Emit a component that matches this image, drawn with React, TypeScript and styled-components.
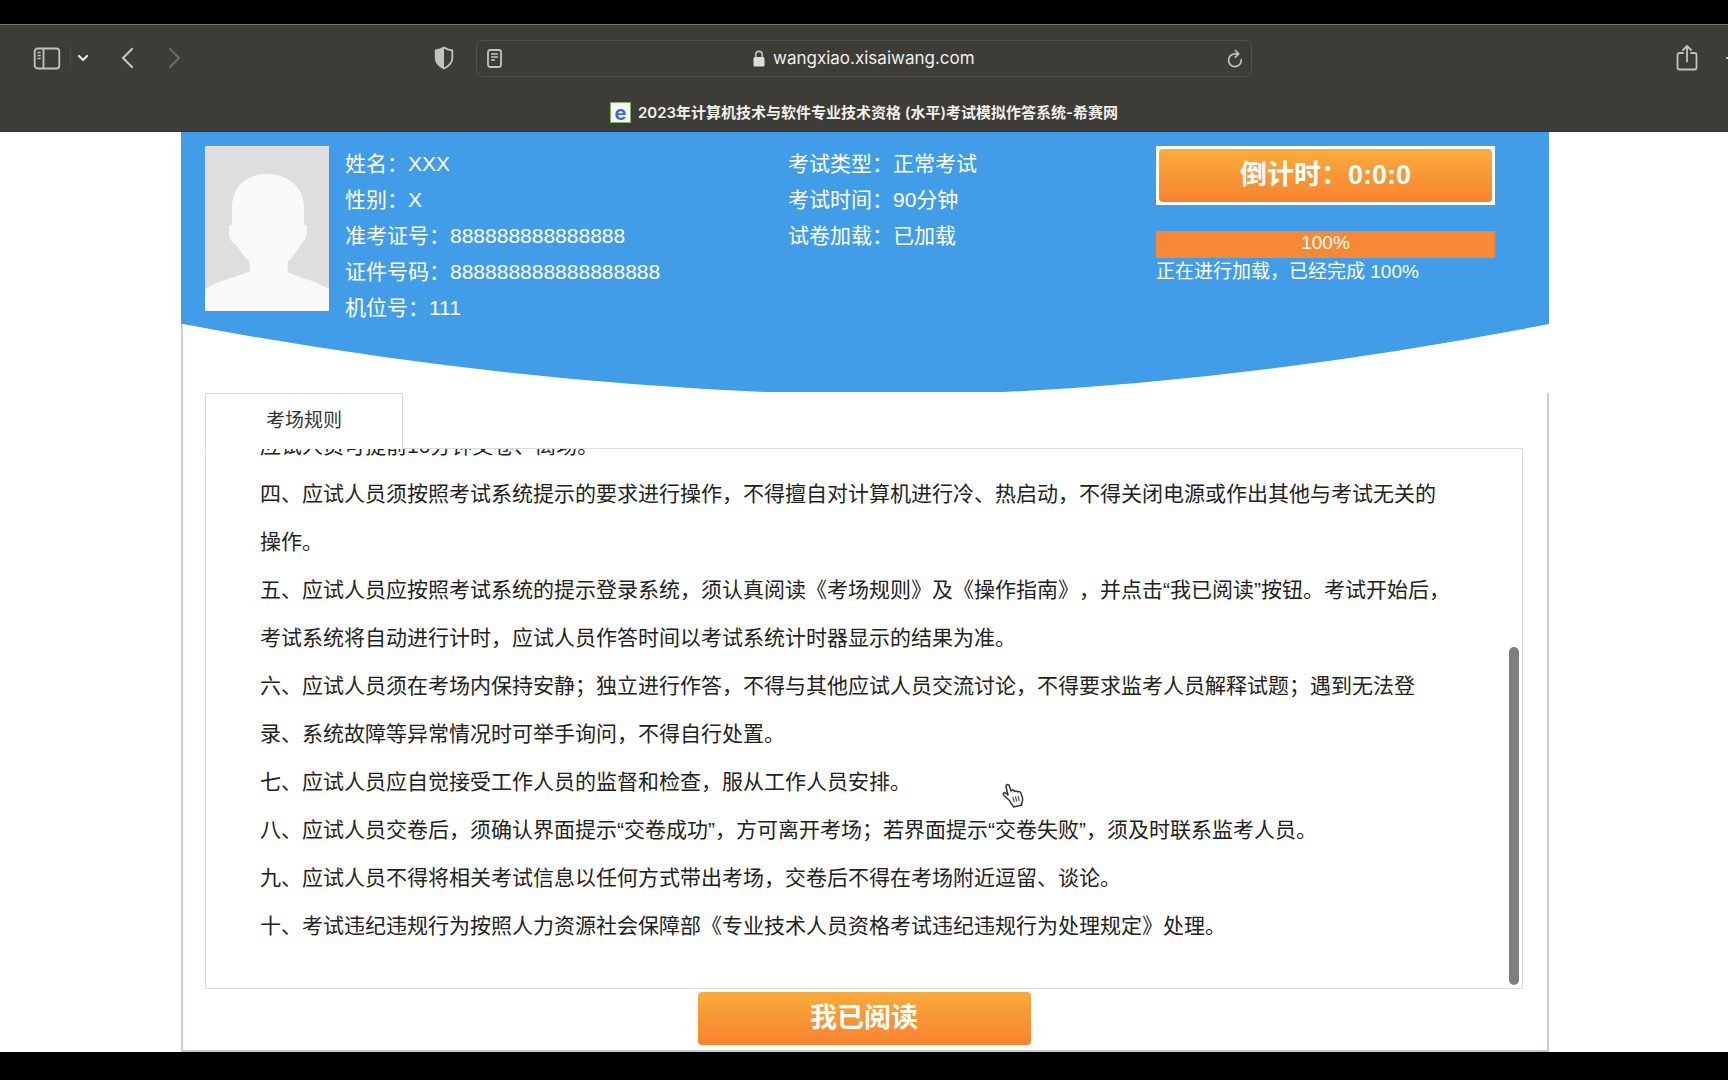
import React, { useLayoutEffect, useRef } from "react";
import styled, { createGlobalStyle } from "styled-components";

const GlobalStyle = createGlobalStyle`
  *, *::before, *::after { box-sizing: border-box; }
  body {
    margin: 0;
    background: #000;
    font-family: "Liberation Sans", "Noto Sans CJK SC", sans-serif;
    text-spacing-trim: space-all;
  }
  button, input { font: inherit; }
`;

const Screen = styled.div`
  display: flex;
  flex-direction: column;
  padding: 24px 0 28px;
  overflow: hidden;
`;

/* ---------- browser chrome ---------- */

const Chrome = styled.header`
  display: flex;
  flex-direction: column;
  height: 108px;
  background: #3d3c36;
  border-top: 1px solid #77776f;
  border-bottom: 1px solid #32383a;
  color: #f0f0ec;
  font-family: Inter, "Noto Sans CJK SC", sans-serif;
`;

const Toolbar = styled.div`
  display: grid;
  grid-template-columns: 1fr 776px 1fr;
  align-items: center;
  height: 66px;
`;

const ToolGroup = styled.div<{ $end?: boolean }>`
  display: flex;
  align-items: center;
  justify-content: ${(p) => (p.$end ? "flex-end" : "flex-start")};
  padding-left: ${(p) => (p.$end ? 0 : 33)}px;
  min-width: 0;
`;

const ToolButton = styled.button<{ $dim?: boolean; $gap?: number }>`
  display: flex;
  flex: none;
  padding: 0;
  margin-left: ${(p) => p.$gap ?? 0}px;
  border: 0;
  background: none;
  color: ${(p) => (p.$dim ? "#6c6c66" : "#c3c3bd")};
`;

const ToolDivider = styled.span`
  width: 1px;
  height: 24px;
  margin-left: 9px;
  background: #4b4b45;
`;

const Spacer = styled.span`
  flex: 1;
`;

const ShieldSlot = styled.span`
  display: flex;
  padding-right: 22px;
`;

const AddressBar = styled.div`
  display: flex;
  align-items: center;
  justify-content: space-between;
  height: 37px;
  padding: 0 8px 0 10px;
  border: 1px solid #51514b;
  border-radius: 7px;
`;

const Address = styled.label`
  display: flex;
  align-items: center;
  gap: 8px;
`;

const AddressInput = styled.input`
  width: 203px;
  padding: 0;
  border: 0;
  outline: 0;
  background: none;
  color: #f0f0ec;
  font-size: 17px;
  line-height: 24px;
`;

const TabTitle = styled.div`
  display: flex;
  align-items: center;
  justify-content: center;
  gap: 7px;
  height: 40px;
  padding-top: 3px;
  font-size: 15px;
  font-weight: 600;
  line-height: 22px;
  white-space: nowrap;
`;

const Favicon = styled.span`
  display: flex;
  align-items: center;
  justify-content: center;
  width: 21px;
  height: 21px;
  border: 1px solid #7fb35c;
  background: #f4fbff;
  color: #4b66d8;
  font-size: 20px;
  font-weight: 700;
  line-height: 16px;
`;

/* ---------- exam page ---------- */

const Page = styled.main`
  padding-left: 2px;
  background: #fff;
`;

const Sheet = styled.div`
  width: 100%;
  max-width: 1368px;
  margin: 0 auto;
`;

const Candidate = styled.section`
  display: grid;
  grid-template-columns: 124px 443px 1fr 339px;
  height: 192px;
  padding: 14px 54px 0 24px;
  background: #429de9;
  color: #fff;
`;

const Photo = styled.svg`
  display: block;
  width: 124px;
  height: 165px;
`;

const InfoList = styled.dl`
  margin: 0;
  padding-left: 16px;
  font-size: 21px;
  line-height: 36px;
`;

const InfoRow = styled.div`
  display: flex;
  white-space: nowrap;
`;

const InfoLabel = styled.dt``;

const InfoValue = styled.dd`
  margin: 0;
`;

const Status = styled.div`
  display: flex;
  flex-direction: column;
`;

const Countdown = styled.div`
  border: 3px solid #fff;
  background: #fff;
`;

const CountdownFace = styled.div`
  border-radius: 4px;
  background: linear-gradient(#faac3c, #f78330);
  color: #fff;
  font-size: 27px;
  font-weight: 700;
  line-height: 53px;
  text-align: center;
`;

const Progress = styled.div`
  margin-top: 26px;
  background: #2f7fc4;
`;

const ProgressFill = styled.div`
  background: #f78834;
  font-size: 19px;
  line-height: 24px;
  height: 27px;
  text-align: center;
`;

const ProgressNote = styled.p`
  margin: 0;
  font-size: 19px;
  line-height: 28px;
  white-space: nowrap;
`;

const Curve = styled.svg`
  display: block;
  width: 100%;
  height: 69px;
  border-left: 2px solid #c3cde6;
`;

const Body = styled.section`
  padding: 0 24px 5px 22px;
  border: solid #c4cdd6;
  border-width: 0 2px 2px;
  border-left-color: #c3cde6;
`;

const TabButton = styled.button`
  display: block;
  width: 198px;
  height: 55px;
  padding: 0;
  border: 1px solid #d9d9d9;
  border-bottom: 0;
  background: #fff;
  color: #333;
  font-size: 19px;
  line-height: 54px;
  text-align: center;
`;

const Panel = styled.div`
  display: flex;
  height: 540px;
  padding-right: 3px;
  border: 1px solid #dcdcdc;
  border-top: 0;
`;

const PanelRule = styled.div`
  height: 1px;
  margin-left: 198px;
  background: #dcdcdc;
`;

const Scroller = styled.div`
  flex: 1;
  padding: 0 55px 38px 54px;
  overflow-y: scroll;
  scrollbar-width: none;
  color: #222;
  font-size: 21px;
  line-height: 48px;
`;

const Rule = styled.p`
  margin: 0;
`;

const ScrollThumb = styled.div`
  align-self: flex-end;
  width: 10px;
  height: 338px;
  margin-bottom: 3px;
  border-radius: 5px;
  background: #808080;
`;

const ReadButton = styled.button`
  display: block;
  width: 333px;
  height: 53px;
  margin: 3px auto 0;
  padding: 0;
  border: 0;
  border-radius: 4px;
  background: linear-gradient(#f9ab3a, #f8822f);
  color: #fff;
  font-size: 27px;
  font-weight: 700;
  line-height: 53px;
`;

const Pointer = styled.svg`
  position: absolute;
  left: 1001px;
  top: 783px;
  width: 24px;
  height: 25px;
  pointer-events: none;
`;

const identity = [
  ["姓名", "XXX"],
  ["性别", "X"],
  ["准考证号", "888888888888888"],
  ["证件号码", "888888888888888888"],
  ["机位号", "111"],
];

const exam = [
  ["考试类型", "正常考试"],
  ["考试时间", "90分钟"],
  ["试卷加载", "已加载"],
];

const rules = [
  "应试人员可提前10分钟交卷、离场。",
  "四、应试人员须按照考试系统提示的要求进行操作，不得擅自对计算机进行冷、热启动，不得关闭电源或作出其他与考试无关的操作。",
  "五、应试人员应按照考试系统的提示登录系统，须认真阅读《考场规则》及《操作指南》，并点击“我已阅读”按钮。考试开始后，考试系统将自动进行计时，应试人员作答时间以考试系统计时器显示的结果为准。",
  "六、应试人员须在考场内保持安静；独立进行作答，不得与其他应试人员交流讨论，不得要求监考人员解释试题；遇到无法登录、系统故障等异常情况时可举手询问，不得自行处置。",
  "七、应试人员应自觉接受工作人员的监督和检查，服从工作人员安排。",
  "八、应试人员交卷后，须确认界面提示“交卷成功”，方可离开考场；若界面提示“交卷失败”，须及时联系监考人员。",
  "九、应试人员不得将相关考试信息以任何方式带出考场，交卷后不得在考场附近逗留、谈论。",
  "十、考试违纪违规行为按照人力资源社会保障部《专业技术人员资格考试违纪违规行为处理规定》处理。",
];

function Info({ rows }: { rows: string[][] }) {
  return (
    <InfoList>
      {rows.map(([label, value]) => (
        <InfoRow key={label}>
          <InfoLabel>{label}：</InfoLabel>
          <InfoValue>{value}</InfoValue>
        </InfoRow>
      ))}
    </InfoList>
  );
}

function BrowserChrome() {
  return (
    <Chrome>
      <Toolbar>
        <ToolGroup>
          <ToolButton aria-label="Sidebar">
            <svg width="28" height="23" viewBox="0 0 28 23" fill="none" stroke="currentColor">
              <rect x="1.7" y="1.5" width="24.6" height="20" rx="3" strokeWidth="1.8" />
              <path d="M10.5 1.5v20" strokeWidth="1.8" />
              <path d="M4.5 5.5h3.2M4.5 8.5h3.2M4.5 11.5h3.2" strokeWidth="1.3" />
            </svg>
          </ToolButton>
          <ToolDivider />
          <ToolButton aria-label="Tab groups" $gap={6}>
            <svg width="12" height="8" viewBox="0 0 12 8" fill="none" stroke="#e6e6e0" strokeWidth="2.2" strokeLinecap="round" strokeLinejoin="round">
              <path d="M2 2l4 4 4-4" />
            </svg>
          </ToolButton>
          <ToolButton aria-label="Back" $gap={31}>
            <svg width="14" height="22" viewBox="0 0 14 22" fill="none" stroke="currentColor" strokeWidth="2.2" strokeLinecap="round" strokeLinejoin="round">
              <path d="M12 2L3 11l9 9" />
            </svg>
          </ToolButton>
          <ToolButton aria-label="Forward" $gap={34} $dim>
            <svg width="14" height="22" viewBox="0 0 14 22" fill="none" stroke="currentColor" strokeWidth="2.2" strokeLinecap="round" strokeLinejoin="round">
              <path d="M2 2l9 9-9 9" />
            </svg>
          </ToolButton>
          <Spacer />
          <ShieldSlot>
            <ToolButton aria-label="Privacy report">
              <svg width="20" height="24" viewBox="0 0 20 24">
                <path d="M10 1.5c2.4 1.8 5 2.6 8.3 3v7.7c0 4.8-3.5 7.8-8.3 10.3-4.8-2.5-8.3-5.5-8.3-10.3V4.5c3.3-.4 5.9-1.2 8.3-3z" fill="none" stroke="currentColor" strokeWidth="1.8" />
                <path d="M10 1.5v21c-4.8-2.5-8.3-5.5-8.3-10.3V4.5c3.3-.4 5.9-1.2 8.3-3z" fill="currentColor" />
              </svg>
            </ToolButton>
          </ShieldSlot>
        </ToolGroup>
        <AddressBar>
          <ToolButton aria-label="Reader">
            <svg width="15" height="19" viewBox="0 0 15 19" fill="none" stroke="currentColor">
              <rect x="1" y="1" width="13" height="17" rx="2.2" strokeWidth="1.8" />
              <path d="M4 5h7M4 8h7M4 11h4" strokeWidth="1.3" />
            </svg>
          </ToolButton>
          <Address>
            <svg width="12" height="17" viewBox="0 0 12 17" aria-hidden="true">
              <path d="M2.8 8V4.600a3.2 3.2 0 0 1 6.4 0V8" fill="none" stroke="#c3c3bd" strokeWidth="1.6" />
              <rect x="0.5" y="7" width="11" height="9.5" rx="1.5" fill="#deded8" />
            </svg>
            <AddressInput aria-label="Address" defaultValue="wangxiao.xisaiwang.com" />
          </Address>
          <ToolButton aria-label="Reload">
            <svg width="16" height="19" viewBox="0 0 16 19" fill="none" stroke="currentColor" strokeWidth="1.7" strokeLinecap="round" strokeLinejoin="round">
              <path d="M14.3 10.8A6.4 6.4 0 1 1 8 4.800h3" />
              <path d="M8.3 1.5l3.4 3.3-3.4 3.3" />
            </svg>
          </ToolButton>
        </AddressBar>
        <ToolGroup $end>
          <ToolButton aria-label="Share">
            <svg width="22" height="28" viewBox="0 0 22 28" fill="none" stroke="currentColor" strokeWidth="1.8" strokeLinecap="round" strokeLinejoin="round">
              <path d="M7 9H3.5A2 2 0 0 0 1.5 11v12.5a2 2 0 0 0 2 2h15a2 2 0 0 0 2-2V11a2 2 0 0 0-2-2H15" />
              <path d="M11 17.5V2M7 6l4-4 4 4" />
            </svg>
          </ToolButton>
          <ToolButton aria-label="New tab" $gap={28}>
            <svg width="2" height="20" viewBox="0 0 2 20" fill="none" stroke="currentColor" strokeWidth="1.8">
              <path d="M0 10h2" />
            </svg>
          </ToolButton>
        </ToolGroup>
      </Toolbar>
      <TabTitle>
        <Favicon aria-hidden="true">e</Favicon>
        <span>2023年计算机技术与软件专业技术资格 (水平)考试模拟作答系统-希赛网</span>
      </TabTitle>
    </Chrome>
  );
}

export default function App() {
  const scroller = useRef<HTMLDivElement>(null);

  useLayoutEffect(() => {
    const el = scroller.current;
    if (el) el.scrollTop = el.scrollHeight;
  }, []);

  return (
    <Screen>
      <GlobalStyle />
      <BrowserChrome />
      <Page>
        <Sheet>
          <Candidate>
            <Photo viewBox="0 0 124 165" preserveAspectRatio="none" aria-hidden="true">
              <rect width="124" height="165" fill="#dedede" />
              <path
                d="M0 143 9 138C22 132 36 130 45 125Q45 120 44 115C38 111 34 100 27 96Q23 91 24 86L24 80 27 78V62C27 40 42 28 62 28S99 40 99 62V78L102 80V87Q101 93 97 97C92 103 90 110 83 115Q82 121 83 126C92 131 103 133 112 137L124 143V165H0z"
                fill="#f9f9f9"
              />
            </Photo>
            <Info rows={identity} />
            <Info rows={exam} />
            <Status>
              <Countdown role="timer">
                <CountdownFace>倒计时：0:0:0</CountdownFace>
              </Countdown>
              <Progress role="progressbar" aria-valuenow={100} aria-valuemin={0} aria-valuemax={100}>
                <ProgressFill>100%</ProgressFill>
              </Progress>
              <ProgressNote>正在进行加载，已经完成 100%</ProgressNote>
            </Status>
          </Candidate>
          <Curve viewBox="0 0 1367 69" preserveAspectRatio="none" aria-hidden="true">
            <path d="M0 0Q297 56 584 68H822Q1077 56 1367 0z" fill="#429de9" />
          </Curve>
          <Body>
            <TabButton role="tab" aria-selected="true">考场规则</TabButton>
            <PanelRule />
            <Panel>
              <Scroller ref={scroller}>
                {rules.map((rule) => (
                  <Rule key={rule}>{rule}</Rule>
                ))}
              </Scroller>
              <ScrollThumb />
            </Panel>
            <ReadButton>我已阅读</ReadButton>
          </Body>
        </Sheet>
      </Page>
      <Pointer viewBox="0 0 24 25" aria-hidden="true">
        <path
          d="M8.5 17.5 3 12.5Q1.5 10.5 3.3 9.8 4.8 9.4 7 12L5 4Q4.8 1.8 6.5 1.6 8 1.6 8.6 3.5L10 8Q10.6 6.6 12.3 7.2 13.3 7.6 13.5 8.6 15 7.2 16.8 9 18.6 7.8 19.8 9.8L21.5 15Q22 18 20.5 20.5L20.8 22 12.5 24 11.5 22Q9.5 20 8.5 17.5z"
          fill="#fff"
          stroke="#333"
          strokeWidth="1.5"
          strokeLinejoin="round"
        />
        <path d="M11.8 14l1.5 5M14.4 13.5l1.4 5M17 13l1.3 5" stroke="#555" strokeWidth="1.2" />
      </Pointer>
    </Screen>
  );
}
